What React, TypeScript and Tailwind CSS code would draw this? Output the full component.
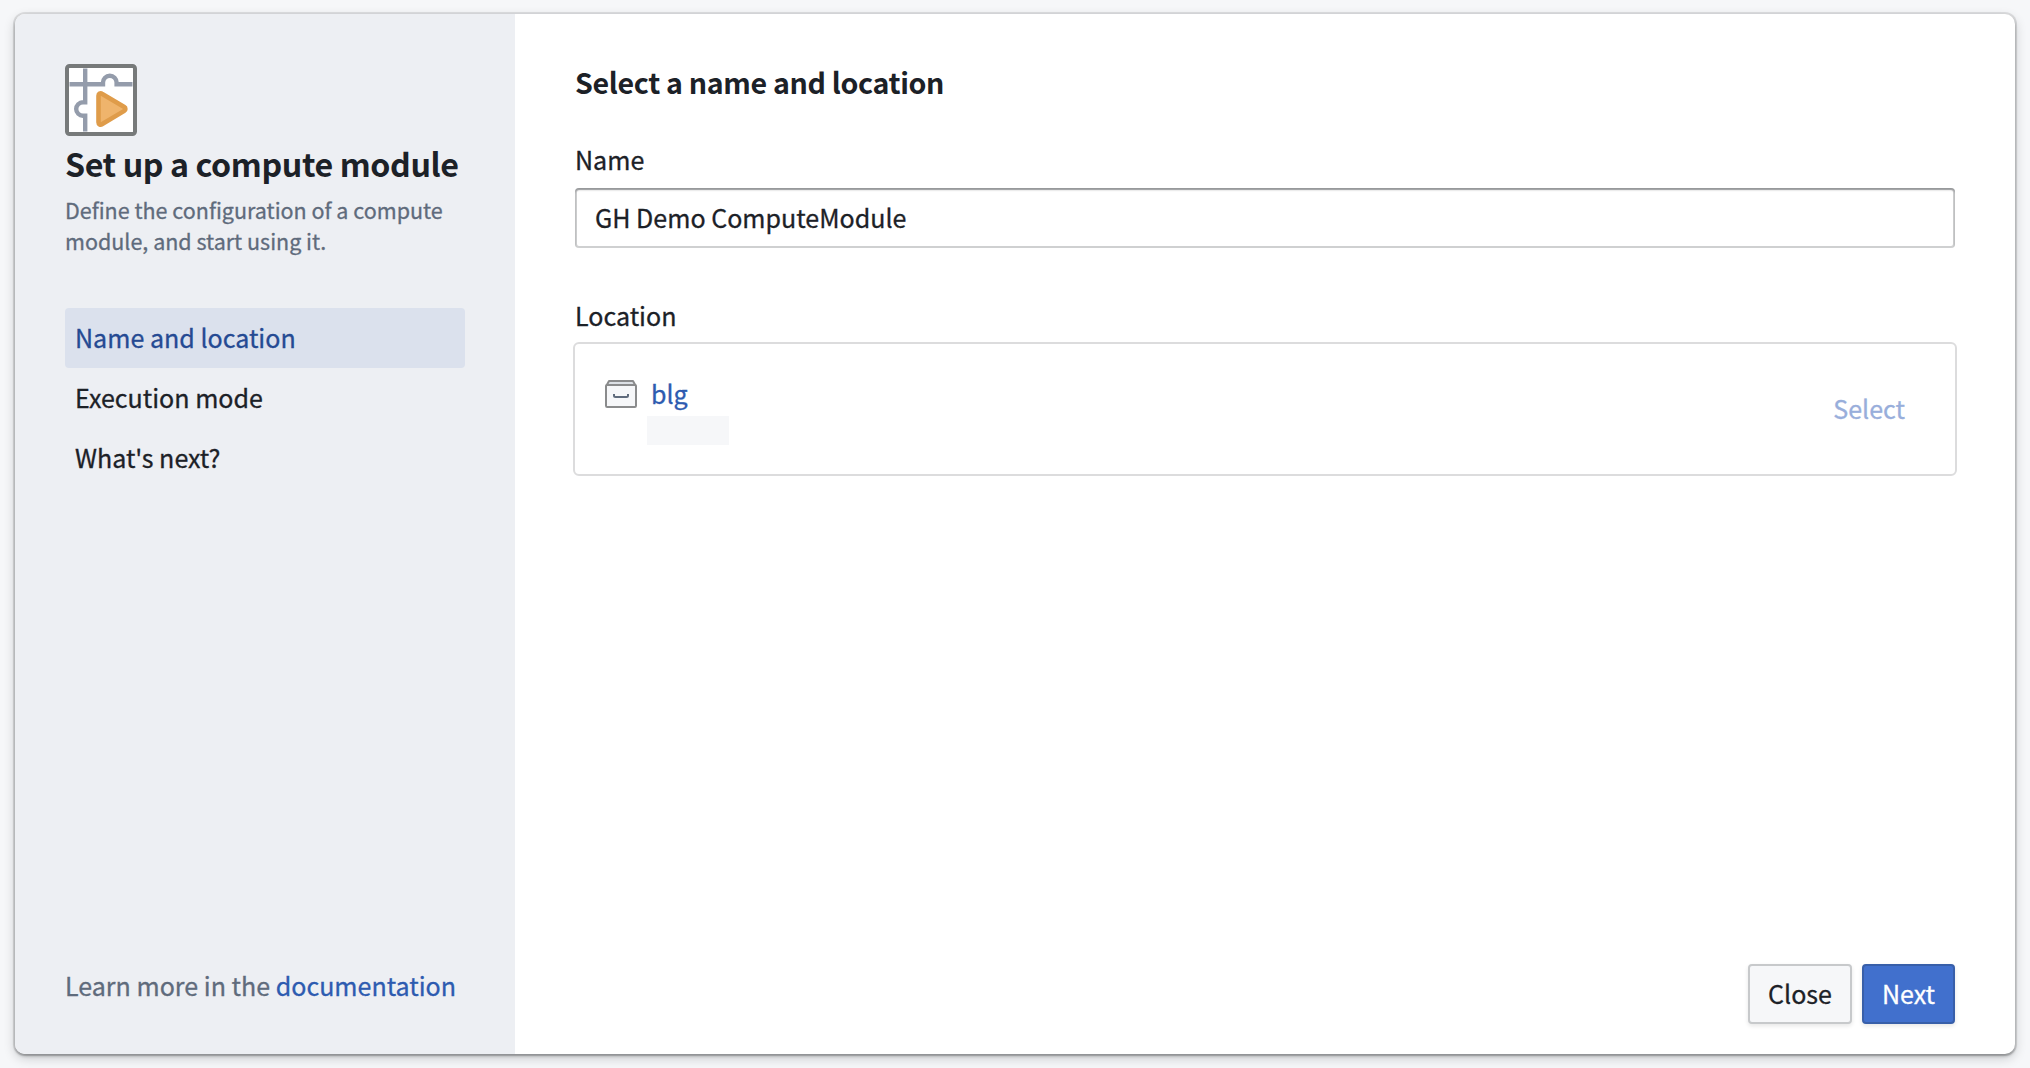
import React from "react";

const steps = ["Name and location", "Execution mode", "What's next?"];

function ModuleIcon() {
  return (
    <svg width="72" height="72" viewBox="0 0 72 72" fill="none" className="block">
      <rect x="2" y="2" width="68" height="68" rx="2.5" fill="#fff" stroke="#777a7a" strokeWidth="4" />
      <path d="M4.5 20.2H38V18.5a6.8 6.8 0 0 1 13.6 0V20.2H67.5" stroke="#949cab" strokeWidth="4.4" />
      <path d="M20.2 4.5V38.2H18a6.8 6.8 0 0 0 0 13.6H20.2V67.5" stroke="#949cab" strokeWidth="4.4" />
      <path d="M33.5 31.6V58.4a2.2 2.2 0 0 0 3.4 1.9L59.3 46.9a2.2 2.2 0 0 0 0-3.8L36.9 29.7a2.2 2.2 0 0 0-3.4 1.9Z" fill="#efb46c" stroke="#df9c4a" strokeWidth="4.6" strokeLinejoin="round" />
    </svg>
  );
}

function ProjectIcon() {
  return (
    <svg width="32" height="28" viewBox="0 0 32 28" fill="none" className="block">
      <path d="M1.5 5.5 4 1h24l2.5 4.5Z" fill="#dce0e5" stroke="#8a8b8c" strokeWidth="2" strokeLinejoin="round" />
      <rect x="1" y="5" width="30" height="22" rx="1.2" fill="#f6f7f9" stroke="#8a8b8c" strokeWidth="2" />
      <path d="M9 14v1.5a1.5 1.5 0 0 0 1.5 1.5h11a1.5 1.5 0 0 0 1.5-1.5V14" stroke="#5f6b7c" strokeWidth="2" />
    </svg>
  );
}

export default function App() {
  return (
    <div className="h-[1068px] w-[2030px] overflow-hidden bg-[#f6f7f9] px-[15px] pt-[14px] font-['Noto_Sans_CJK_SC',sans-serif] text-[25.06px] text-[#1c2127] [-webkit-text-stroke:0.3px_currentColor]">
      <div className="flex h-[1040px] w-[2000px] overflow-hidden rounded-[10px] bg-white shadow-[0_0_0_2px_rgba(17,20,24,0.1),0_2px_3px_rgba(17,20,24,0.3),0_4px_12px_rgba(17,20,24,0.2)]">
        <aside className="flex w-[500px] flex-col bg-[#edeff3] px-[50px] pt-[50px] pb-[39px]">
          <ModuleIcon />
          <h1 className="mt-[7px] h-[40px] text-[32.2px] leading-[40px] font-bold tracking-[-0.4px] whitespace-nowrap [-webkit-text-stroke:0px]">Set up a compute module</h1>
          <p className="mt-[11px] text-[21.5px] leading-[31px] text-[#5f6b7c]">
            Define the configuration of a compute
            <br />
            module, and start using it.
          </p>
          <nav className="mt-[52px] flex flex-col">
            {steps.map((step, i) => (
              <a
                key={step}
                className={
                  i === 0
                    ? "h-[60px] rounded-[4px] bg-[#dbe1ed] px-[10px] leading-[58px] text-[#254a93]"
                    : "h-[60px] px-[10px] leading-[58px]"
                }
              >
                {step}
              </a>
            ))}
          </nav>
          <div className="mt-auto h-[60px] leading-[60px] whitespace-nowrap text-[#5f6b7c]">
            Learn more in the <a className="text-[#2d5bb0]">documentation</a>
          </div>
        </aside>

        <main className="flex flex-1 flex-col px-[60px] pt-[48px] pb-[30px]">
          <h2 className="h-[40px] text-[28.6px] leading-[40px] font-bold tracking-[-0.33px] [-webkit-text-stroke:0px]">Select a name and location</h2>
          <label className="mt-[39px] h-[36px] leading-[36px]">Name</label>
          <div className="mt-[11px] flex h-[60px] items-center rounded-[4px] px-[20px] shadow-[inset_0_0_0_2px_rgba(17,20,24,0.2),inset_0_2px_2px_rgba(17,20,24,0.3)]">
            GH Demo ComputeModule
          </div>
          <label className="mt-[49px] h-[36px] leading-[36px]">Location</label>
          <section className="-mx-[2px] mt-[9px] flex h-[134px] items-center justify-between rounded-[6px] border-2 border-[#dcdcdd] pr-[50px] pl-[30px]">
            <div className="flex gap-[10px] self-start pt-[30px]">
              <div className="pt-[6px]">
                <ProjectIcon />
              </div>
              <div className="flex flex-col">
                <a className="h-[38px] pl-[4px] leading-[38px] text-[#2d5bb0]">blg</a>
                <div className="mt-[4px] h-[29px] w-[82px] bg-[#f6f7f9]" />
              </div>
            </div>
            <button className="text-[#98aedb]">Select</button>
          </section>
          <footer className="mt-auto flex justify-end gap-[10px]">
            <button className="h-[60px] w-[104px] rounded-[4px] border-2 border-[#c7c9cb] bg-[#f6f7f9] pb-[2px] leading-[54px] shadow-[0_2px_4px_rgba(17,20,24,0.1)]">Close</button>
            <button className="h-[60px] w-[93px] rounded-[4px] border-2 border-[#385fa9] bg-[#4170cd] pb-[2px] leading-[54px] text-white shadow-[0_2px_4px_rgba(17,20,24,0.1)]">Next</button>
          </footer>
        </main>
      </div>
    </div>
  );
}
